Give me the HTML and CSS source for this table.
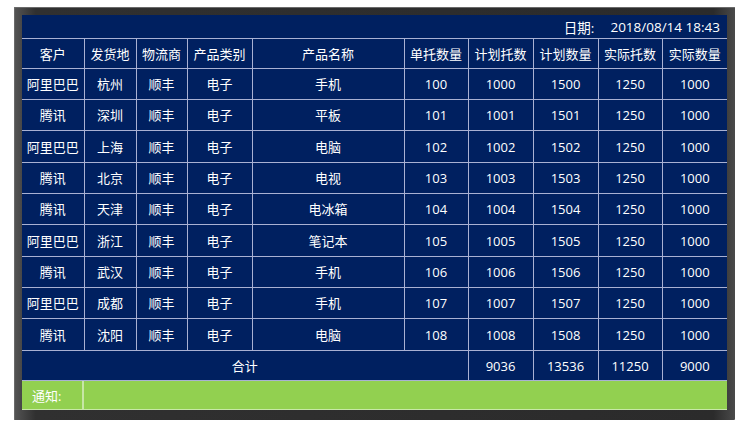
FILE: index.html
```html
<!DOCTYPE html>
<html lang="zh-CN">
<head>
<meta charset="utf-8">
<link rel="stylesheet" href="styles.css">
</head>
<body>
<div class="frame">
  <div class="panel">
    <div class="date-row"><span class="date-label">日期:</span><span class="date-value">2018/08/14 18:43</span></div>
    <table class="grid">
      <colgroup>
        <col class="c62"><col class="c52"><col class="c51"><col class="c65"><col class="c152"><col class="c64"><col class="c65"><col class="c65"><col class="c64"><col class="c65">
      </colgroup>
      <thead>
        <tr class="head"><th>客户</th><th>发货地</th><th>物流商</th><th>产品类别</th><th>产品名称</th><th>单托数量</th><th>计划托数</th><th>计划数量</th><th>实际托数</th><th>实际数量</th></tr>
      </thead>
      <tbody>
        <tr><td>阿里巴巴</td><td>杭州</td><td>顺丰</td><td>电子</td><td>手机</td><td>100</td><td>1000</td><td>1500</td><td>1250</td><td>1000</td></tr>
        <tr><td>腾讯</td><td>深圳</td><td>顺丰</td><td>电子</td><td>平板</td><td>101</td><td>1001</td><td>1501</td><td>1250</td><td>1000</td></tr>
        <tr><td>阿里巴巴</td><td>上海</td><td>顺丰</td><td>电子</td><td>电脑</td><td>102</td><td>1002</td><td>1502</td><td>1250</td><td>1000</td></tr>
        <tr><td>腾讯</td><td>北京</td><td>顺丰</td><td>电子</td><td>电视</td><td>103</td><td>1003</td><td>1503</td><td>1250</td><td>1000</td></tr>
        <tr><td>腾讯</td><td>天津</td><td>顺丰</td><td>电子</td><td>电冰箱</td><td>104</td><td>1004</td><td>1504</td><td>1250</td><td>1000</td></tr>
        <tr><td>阿里巴巴</td><td>浙江</td><td>顺丰</td><td>电子</td><td>笔记本</td><td>105</td><td>1005</td><td>1505</td><td>1250</td><td>1000</td></tr>
        <tr><td>腾讯</td><td>武汉</td><td>顺丰</td><td>电子</td><td>手机</td><td>106</td><td>1006</td><td>1506</td><td>1250</td><td>1000</td></tr>
        <tr><td>阿里巴巴</td><td>成都</td><td>顺丰</td><td>电子</td><td>手机</td><td>107</td><td>1007</td><td>1507</td><td>1250</td><td>1000</td></tr>
        <tr><td>腾讯</td><td>沈阳</td><td>顺丰</td><td>电子</td><td>电脑</td><td>108</td><td>1008</td><td>1508</td><td>1250</td><td>1000</td></tr>
        <tr class="total"><td colspan="6">合计</td><td>9036</td><td>13536</td><td>11250</td><td>9000</td></tr>
      </tbody>
    </table>
    <div class="notice">
      <div class="notice-label">通知:</div>
      <div class="notice-body"></div>
    </div>
  </div>
</div>
</body>
</html>
```

FILE: styles.css
```css
html, body {
  margin: 0;
  padding: 0;
  background: #ffffff;
}
body {
  padding: 7px 0 0 14px;
  font-family: "Open Sans", "Noto Sans CJK SC", sans-serif;
  font-size: 13px;
  color: #ffffff;
}
.frame {
  width: 705px;
  padding: 8px 8px 10px 8px;
  background: linear-gradient(90deg, #555555 0%, #303030 3%, #2b2b2b 97%, #4a4a4a 100%);
  border-radius: 1px;
  box-shadow: inset 1px 1px 0 #6a6a6a;
}
.panel {
  width: 705px;
  height: 395px;
  background: #002060;
  display: flex;
  flex-direction: column;
}
.date-row {
  height: 23px;
  display: flex;
  justify-content: flex-end;
  align-items: center;
  padding-right: 7px;
  box-sizing: border-box;
  font-size: 13.5px;
}
.date-label {
  margin-right: 16px;
}
.grid {
  border-collapse: collapse;
  table-layout: fixed;
  width: 705px;
}
.grid th, .grid td {
  border: 1px solid #a9b1d3;
  padding: 0;
  text-align: center;
  font-weight: normal;
  white-space: nowrap;
  line-height: 16px;
}
.grid tr > :first-child { border-left: none; }
.grid tr > :last-child { border-right: none; }
.head { height: 30px; }
.grid tbody tr { height: 31px; }
.grid tbody tr:nth-child(3n) { height: 32px; }
.grid tbody tr.total { height: 30px; }
.c62 { width: 62px; }
.c52 { width: 52px; }
.c51 { width: 51px; }
.c65 { width: 65px; }
.c152 { width: 152px; }
.c64 { width: 64px; }
.notice {
  flex: 1;
  display: flex;
  background: #92d050;
  border-bottom: 1px solid #c8e8a8;
}
.notice-label {
  width: 62px;
  border-right: 2px solid #c7e6a6;
  display: flex;
  align-items: center;
  padding-left: 10px;
  box-sizing: border-box;
}
.notice-body {
  flex: 1;
}
```
